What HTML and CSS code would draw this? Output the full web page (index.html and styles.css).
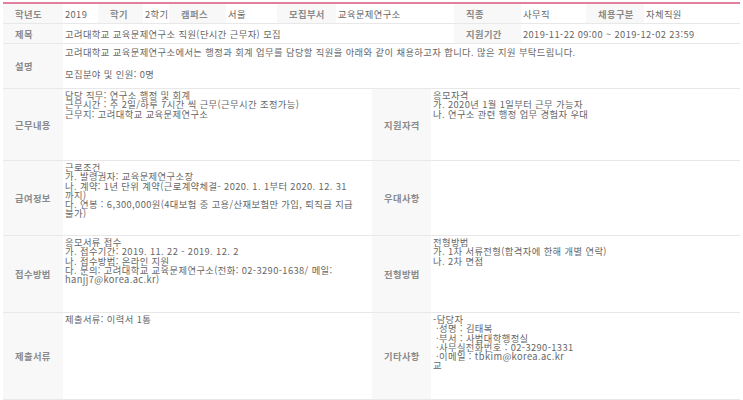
FILE: index.html
```html
<!DOCTYPE html>
<html lang="ko">
<head>
<meta charset="utf-8">
<link rel="stylesheet" href="styles.css">
</head>
<body>
<table class="info top">
  <colgroup>
    <col class="c60"><col class="c35"><col class="c45"><col class="c26">
    <col class="c57"><col class="c51"><col class="c59"><col class="c118">
    <col class="c67"><col class="c65"><col class="c58"><col>
  </colgroup>
  <tr class="r1">
    <th>학년도</th><td>2019</td>
    <th>학기</th><td>2학기</td>
    <th>캠퍼스</th><td>서울</td>
    <th>모집부서</th><td>교육문제연구소</td>
    <th>직종</th><td>사무직</td>
    <th>채용구분</th><td>자체직원</td>
  </tr>
  <tr class="r2">
    <th>제목</th><td colspan="7">고려대학교 교육문제연구소 직원(단시간 근무자) 모집</td>
    <th>지원기간</th><td colspan="3">2019-11-22 09:00 ~ 2019-12-02 23:59</td>
  </tr>
</table>
<table class="info body">
  <colgroup>
    <col class="c60"><col class="c309"><col class="c59"><col>
  </colgroup>
  <tr class="desc">
    <th>설명</th>
    <td colspan="3"><p>고려대학교 교육문제연구소에서는 행정과 회계 업무를 담당할 직원을 아래와 같이 채용하고자 합니다. 많은 지원 부탁드립니다.</p><p>모집분야 및 인원: 0명</p></td>
  </tr>
  <tr class="pair h1">
    <th>근무내용</th>
    <td>담당 직무: 연구소 행정 및 회계<br>근무시간 : 주 2일/하루 7시간 씩 근무(근무시간 조정가능)<br>근무지: 고려대학교 교육문제연구소</td>
    <th>지원자격</th>
    <td>응모자격<br>가. 2020년 1월 1일부터 근무 가능자<br>나. 연구소 관련 행정 업무 경험자 우대</td>
  </tr>
  <tr class="pair h2">
    <th>급여정보</th>
    <td>근로조건<br>가. 발령권자: 교육문제연구소장<br>나. 계약: 1년 단위 계약(근로계약체결- 2020. 1. 1부터 2020. 12. 31 까지)<br>다. 연봉 : 6,300,000원(4대보험 중 고용/산재보험만 가입, 퇴직금 지급 불가)</td>
    <th>우대사항</th>
    <td></td>
  </tr>
  <tr class="pair h3">
    <th>접수방법</th>
    <td>응모서류 접수<br>가. 접수기간: 2019. 11. 22 - 2019. 12. 2<br>나. 접수방법: 온라인 지원<br>다. 문의: 고려대학교 교육문제연구소(전화: 02-3290-1638/ 메일: hanjj7@korea.ac.kr)</td>
    <th>전형방법</th>
    <td>전형방법<br>가. 1차 서류전형(합격자에 한해 개별 연락)<br>나. 2차 면접</td>
  </tr>
  <tr class="pair h4">
    <th>제출서류</th>
    <td>제출서류: 이력서 1통</td>
    <th>기타사항</th>
    <td>-담당자<br>&nbsp;·성명 : 김태복<br>&nbsp;·부서 : 사범대학행정실<br>&nbsp;·사무실전화번호 : 02-3290-1331<br>&nbsp;·이메일 : tbkim@korea.ac.kr<br>교</td>
  </tr>
</table>
</body>
</html>
```
FILE: styles.css
```css
html, body {
  margin: 0;
  background: #fff;
}
body {
  padding: 2px 3px 0 3px;
  font-family: "Noto Sans CJK KR", "Noto Sans", sans-serif;
  font-size: 9.3px;
  letter-spacing: 0.4px;
  color: #666;
}
.c26 { width: 26px; }
.c35 { width: 35px; }
.c45 { width: 45px; }
.c51 { width: 51px; }
.c57 { width: 57px; }
.c58 { width: 58px; }
.c59 { width: 59px; }
.c60 { width: 60px; }
.c65 { width: 65px; }
.c67 { width: 67px; }
.c118 { width: 118px; }
.c309 { width: 309px; }
.info {
  width: 737px;
  border-collapse: collapse;
  table-layout: fixed;
}
.info.top {
  border-top: 2px solid #e0809c;
}
.info th {
  background: #f8f8f8;
  color: #8a8a8a;
  font-weight: bold;
  text-align: left;
  padding: 0 0 0 12px;
  border-bottom: 1px solid #e8e8e8;
  white-space: nowrap;
}
.info td {
  padding: 0 2px;
  border-bottom: 1px solid #e8e8e8;
  white-space: nowrap;
}
.r1 th, .r1 td { height: 19px; }
.r2 th, .r2 td { height: 19px; }
.desc th, .desc td { height: 41px; }
.desc td { vertical-align: top; line-height: 11px; padding-top: 3px; }
.desc p { margin: 0 0 11px 0; }
.desc p:last-child { margin: 0; }
.pair td {
  vertical-align: top;
  white-space: normal;
  word-break: keep-all;
  line-height: 9.3px;
  padding-top: 2px;
}
.pair th { vertical-align: middle; }
.h1 th, .h1 td { height: 69px; }
.h2 th, .h2 td { height: 72px; }
.h3 th, .h3 td { height: 74px; }
.h4 th, .h4 td { height: 84px; }
```
